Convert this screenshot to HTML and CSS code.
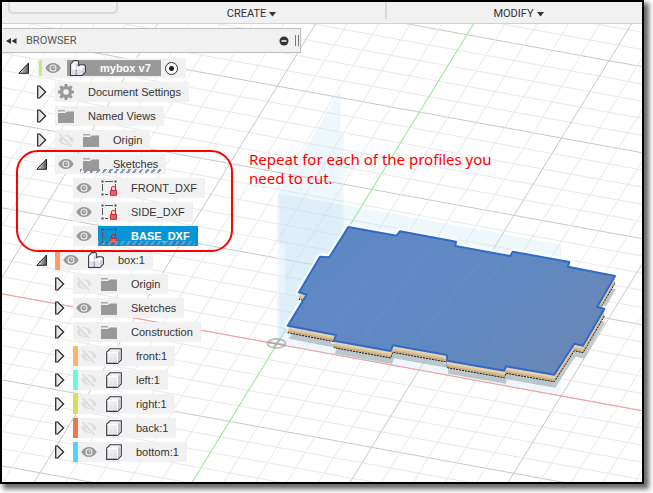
FILE: index.html
```html
<!DOCTYPE html>
<html lang="en">
<head>
<meta charset="utf-8">
<title>mybox v7</title>
<link rel="stylesheet" href="styles.css">
</head>
<body>
<svg class="defs" aria-hidden="true">
  <defs>
    <linearGradient id="gTri" x1="0" y1="0" x2="1" y2="0"><stop offset="0" stop-color="#eee"/><stop offset="1" stop-color="#555"/></linearGradient>
    <linearGradient id="gCube" x1="0" y1="0" x2="1" y2="1"><stop offset="0" stop-color="#fff"/><stop offset="1" stop-color="#d4d6de"/></linearGradient>
    <symbol id="open" viewBox="0 0 12 12"><path d="M.8 11.300 10.500 1v10.300z" fill="url(#gTri)" stroke="#222"/></symbol>
    <symbol id="closed" viewBox="0 0 12 14"><path d="M1.700 1v12h2l6-6-6-6z" fill="#e4e4ea" stroke="#222" stroke-width="1.200"/></symbol>
    <symbol id="eye" viewBox="0 0 16 16"><path d="M.3 8C2 4.700 4.800 3 8 3s6 1.700 7.700 5C14 11.300 11.200 13 8 13S2 11.300.3 8z" fill="#999"/><circle cx="8" cy="8" r="3.500" fill="#f1f1f1"/><circle cx="8" cy="8" r="2.400" fill="#999"/><circle cx="8.500" cy="7.500" r=".8" fill="#eee"/></symbol>
    <symbol id="eyeoff" viewBox="0 0 16 16"><path d="M.3 8C2 4.700 4.800 3 8 3s6 1.700 7.700 5C14 11.300 11.200 13 8 13S2 11.300.3 8z" fill="#dedede"/><circle cx="8" cy="8" r="3.500" fill="#f1f1f1"/><circle cx="8" cy="8" r="2.200" fill="#dedede"/><path d="M2.500 1.500 14.500 14" stroke="#f1f1f1" stroke-width="3.500"/><path d="M1.500 2 13.500 14.500" stroke="#dadada" stroke-width="1.500"/></symbol>
    <symbol id="folder" viewBox="0 0 16 16"><path d="M0 5h7l2-1.500h7V15H0z" fill="#999"/><path d="M0 2h7v1.500H0z" fill="#aaa"/></symbol>
    <symbol id="gear" viewBox="0 0 16 16"><circle cx="8" cy="8" r="4.500" fill="none" stroke="#999" stroke-width="3.400"/><path d="M8 0v3M8 13v3M0 8h3M13 8h3M2.300 2.300l2.200 2.200M11.500 11.500l2.200 2.200M2.300 13.700l2.200-2.200M11.500 4.500l2.200-2.200" stroke="#999" stroke-width="3"/></symbol>
    <symbol id="parts" viewBox="0 0 16 16"><path d="M.6 4 3.600.6h3.800l1.200 1v4.200l1.400-1h3.800l1.600 1.200v5.800l-3.200 3.600H.6z" fill="#fbfbfd" stroke="#333844" stroke-width="1.100" stroke-linejoin="round"/><path d="M5.800 4.200 8.100 1.900v4.300L5.800 8.600zM12.200 9 14.900 6.600v5l-2.700 3.200z" fill="#c9cbd4"/><path d="M1.200 9.500h4.500V15H1.200zM6.700 9.500h5V15h-5z" fill="#dfe0e7"/><path d="M6.200 9.300V15" stroke="#777b86" stroke-width=".9"/></symbol>
    <symbol id="cube" viewBox="0 0 16 16"><path d="M.7 4.200 4 .8h11.300v11l-3.600 3.600H.7z" fill="url(#gCube)" stroke="#333844" stroke-width="1.100" stroke-linejoin="round"/><path d="m11.900 4.500 2.900-2.900v10l-2.900 2.900z" fill="#c3c5ce"/><path d="M1.300 4.500h10.100V15" fill="none" stroke="#fff"/></symbol>
    <symbol id="sketch" viewBox="0 0 16 16"><path d="M4 1.500h8M1.500 4v7M14.500 4v4M4 14.500h3" fill="none" stroke="#555"/><path d="M.5.500h2v2h-2zM13.500.500h2v2h-2zM.5 13.500h2v2h-2z" fill="#444"/><path d="M10.500 10V8.500a2 2 0 0 1 4 0V10" fill="none" stroke="#c8282d" stroke-width="1.200"/><path d="M9.500 10.500h6v4.800h-6z" fill="#dc686b" stroke="#c8282d"/></symbol>
  </defs>
</svg>

<main class="window">
  <header class="toolbar">
    <span class="slot"></span>
    <button class="menu">CREATE <svg viewBox="0 0 7 5"><path d="M0 0h7L3.500 4.500z"/></svg></button>
    <button class="menu modify">MODIFY <svg viewBox="0 0 7 5"><path d="M0 0h7L3.500 4.500z"/></svg></button>
  </header>

  <section class="stage">
    <svg class="scene" viewBox="2 24 640 458" preserveAspectRatio="xMinYMin slice" aria-hidden="true">
      <defs>
        <g id="rows"><path class="major" d="M0 0l660 120.500"/><path class="minor" d="M0 17.200l660 120.500M0 34.400l660 120.500M0 51.600l660 120.500M0 68.800l660 120.500"/></g>
        <g id="cols"><path class="major" d="M0 24l-281.200 458"/><path class="minor" d="M31.600 24l-281.200 458M63.200 24l-281.200 458M94.800 24l-281.200 458M126.400 24l-281.200 458"/></g>
        <path id="plate" d="M348.300 227 396.700 235.700 400 231.200 456 241.700 455.300 246 510.300 256 512.700 251.700 569.300 262 568 266.700 615 276 597.300 306.700 604.300 309 583 345.700 574.300 343.700 554.300 374.700 506 366.300 504.300 370.700 447.300 360.700 447 355 392.700 345.300 390.700 351 334 340.700 336 335 287.700 325.700 306.700 294.700 299 292.300 320 256.700 329.300 257.300z"/>
        <linearGradient id="gPlate" x1="0" y1="0" x2="1" y2=".5"><stop offset="0" stop-color="#5d87c1"/><stop offset=".4" stop-color="#6089c5"/><stop offset=".75" stop-color="#6089c0"/><stop offset="1" stop-color="#6887b8"/></linearGradient>
      </defs>
      <g>
        <use href="#rows" y="-136.500"/><use href="#rows" y="-50.500"/><use href="#rows" y="35.500"/><use href="#rows" y="121.500"/><use href="#rows" y="207.500"/><use href="#rows" y="293.500"/><use href="#rows" y="379.500"/><use href="#rows" y="465.500"/>
        <use href="#cols" x="-.5"/><use href="#cols" x="157.500"/><use href="#cols" x="315.500"/><use href="#cols" x="473.500"/><use href="#cols" x="631.500"/><use href="#cols" x="789.500"/>
      </g>
      <path class="axis-x" d="M0 293.500l660 120.500"/>
      <path class="axis-y" d="M473.500 24l-281.200 458"/>
      <g class="planes">
        <path d="M340.700 89V240L279 344V192z"/>
        <path d="M340.700 134h3V238h-3z"/>
        <path d="M276.700 193 561 244.500V395L276.700 344z"/>
        <path class="strong" d="M279 193.500 340.700 204.500V240L279 342z"/>
        <path class="pale" d="M277 244h8v49h-8z"/>
      </g>
      <ellipse class="origin" cx="276.500" cy="343.500" rx="9" ry="4.500"/>
      <path class="origin" d="M268 342l17 3M279.500 339.500l-6 8"/>
      <use href="#plate" class="shade" x="1" y="13"/>
      <use href="#plate" class="glow"/>
      <use href="#plate" class="shade-edge" y="7"/>
      <use href="#plate" class="wood-dark" y="6"/>
      <use href="#plate" class="wood" y="5"/>
      <use href="#plate" class="wood-light" y="3"/>
      <use href="#plate" class="face"/>
      <path class="grain" d="M390 245 330 335M430 250 360 342M480 262 410 348M500 265 440 350M545 270 480 360M570 280 510 362M590 285 540 368"/>
    </svg>

    <p class="note">Repeat for each of the profiles you<br>need to cut.</p>

    <div class="browser-head">
      <button class="collapse" aria-label="Collapse"><svg viewBox="0 0 11 8"><path d="M5 1v6L0 4zM10.500 1v6l-5-3z"/></svg></button>
      <h1>BROWSER</h1>
      <button class="hide" aria-label="Hide"><svg viewBox="0 0 10 10"><circle cx="5" cy="5" r="4.500"/><path d="M2.500 5h5" stroke="#fff" stroke-width="1.500"/></svg></button>
      <span class="grip"></span>
    </div>

    <ul class="tree">
      <li>
        <div class="row"><button class="twist" aria-label="Collapse"><svg><use href="#open"/></svg></button>
          <div class="chip root"><i class="stripe lime"></i><button class="icon" aria-label="Visible"><svg><use href="#eye"/></svg></button><span class="label"><svg class="icon"><use href="#parts"/></svg>mybox v7</span><input type="radio" name="active" aria-label="Activate mybox" checked></div></div>
        <ul>
          <li class="row"><button class="twist" aria-label="Expand"><svg><use href="#closed"/></svg></button><div class="chip"><span class="label first"><svg class="icon"><use href="#gear"/></svg>Document Settings</span></div></li>
          <li class="row"><button class="twist" aria-label="Expand"><svg><use href="#closed"/></svg></button><div class="chip"><span class="label first"><svg class="icon"><use href="#folder"/></svg>Named Views</span></div></li>
          <li class="row"><button class="twist" aria-label="Expand"><svg><use href="#closed"/></svg></button><div class="chip"><button class="icon" aria-label="Hidden"><svg><use href="#eyeoff"/></svg></button><span class="label"><svg class="icon"><use href="#folder"/></svg>Origin</span></div></li>
          <li class="marked">
            <div class="row"><button class="twist" aria-label="Collapse"><svg><use href="#open"/></svg></button><div class="chip"><button class="icon" aria-label="Visible"><svg><use href="#eye"/></svg></button><span class="label hatch"><svg class="icon"><use href="#folder"/></svg>Sketches</span></div></div>
            <ul>
              <li class="row"><span class="twist"></span><div class="chip"><button class="icon" aria-label="Visible"><svg><use href="#eye"/></svg></button><span class="label"><svg class="icon"><use href="#sketch"/></svg>FRONT_DXF</span></div></li>
              <li class="row"><span class="twist"></span><div class="chip"><button class="icon" aria-label="Visible"><svg><use href="#eye"/></svg></button><span class="label"><svg class="icon"><use href="#sketch"/></svg>SIDE_DXF</span></div></li>
              <li class="row"><span class="twist"></span><div class="chip"><button class="icon" aria-label="Visible"><svg><use href="#eye"/></svg></button><span class="label hatch selected"><svg class="icon"><use href="#sketch"/></svg>BASE_DXF</span></div></li>
            </ul>
          </li>
          <li>
            <div class="row"><button class="twist" aria-label="Collapse"><svg><use href="#open"/></svg></button><div class="chip"><i class="stripe orange"></i><button class="icon" aria-label="Visible"><svg><use href="#eye"/></svg></button><span class="label"><svg class="icon"><use href="#parts"/></svg>box:1</span></div></div>
            <ul>
              <li class="row"><button class="twist" aria-label="Expand"><svg><use href="#closed"/></svg></button><div class="chip"><button class="icon" aria-label="Hidden"><svg><use href="#eyeoff"/></svg></button><span class="label"><svg class="icon"><use href="#folder"/></svg>Origin</span></div></li>
              <li class="row"><button class="twist" aria-label="Expand"><svg><use href="#closed"/></svg></button><div class="chip"><button class="icon" aria-label="Visible"><svg><use href="#eye"/></svg></button><span class="label"><svg class="icon"><use href="#folder"/></svg>Sketches</span></div></li>
              <li class="row"><button class="twist" aria-label="Expand"><svg><use href="#closed"/></svg></button><div class="chip"><button class="icon" aria-label="Hidden"><svg><use href="#eyeoff"/></svg></button><span class="label"><svg class="icon"><use href="#folder"/></svg>Construction</span></div></li>
              <li class="row"><button class="twist" aria-label="Expand"><svg><use href="#closed"/></svg></button><div class="chip"><i class="stripe amber"></i><button class="icon" aria-label="Hidden"><svg><use href="#eyeoff"/></svg></button><span class="label"><svg class="icon"><use href="#cube"/></svg>front:1</span></div></li>
              <li class="row"><button class="twist" aria-label="Expand"><svg><use href="#closed"/></svg></button><div class="chip"><i class="stripe aqua"></i><button class="icon" aria-label="Hidden"><svg><use href="#eyeoff"/></svg></button><span class="label"><svg class="icon"><use href="#cube"/></svg>left:1</span></div></li>
              <li class="row"><button class="twist" aria-label="Expand"><svg><use href="#closed"/></svg></button><div class="chip"><i class="stripe olive"></i><button class="icon" aria-label="Hidden"><svg><use href="#eyeoff"/></svg></button><span class="label"><svg class="icon"><use href="#cube"/></svg>right:1</span></div></li>
              <li class="row"><button class="twist" aria-label="Expand"><svg><use href="#closed"/></svg></button><div class="chip"><i class="stripe rust"></i><button class="icon" aria-label="Hidden"><svg><use href="#eyeoff"/></svg></button><span class="label"><svg class="icon"><use href="#cube"/></svg>back:1</span></div></li>
              <li class="row"><button class="twist" aria-label="Expand"><svg><use href="#closed"/></svg></button><div class="chip"><i class="stripe sky"></i><button class="icon" aria-label="Visible"><svg><use href="#eye"/></svg></button><span class="label"><svg class="icon"><use href="#cube"/></svg>bottom:1</span></div></li>
            </ul>
          </li>
        </ul>
      </li>
    </ul>
  </section>
</main>
</body>
</html>
```
FILE: styles.css
```css
* { box-sizing: border-box; }
body { margin: 0; padding: 0 9px 9px 0; background: #fff; font: 11px/16px "Liberation Sans", Arial, sans-serif; color: #333; }
button { border: 0; padding: 0; margin: 0; background: none; font: inherit; color: inherit; }
svg { display: block; }
ul { list-style: none; margin: 0; padding: 0; }
.defs { position: absolute; width: 0; height: 0; }

.window { border: 2px solid #000; box-shadow: 4px 4px 5px 1px rgba(0, 0, 0, .6); overflow: hidden; background: #fff; }

.toolbar { display: grid; grid-template-columns: 116px 267px 1fr; height: 22px; background: #f1f1f1; border-bottom: 1px solid #d2d2d2; }
.slot { height: 12px; margin-left: 6px; border: 2px solid #dcdcdc; border-top: 0; border-radius: 0 0 5px 5px; }
.menu { display: flex; align-items: center; justify-content: center; gap: 3px; height: 24px; font-family: Roboto, sans-serif; position: relative; }
.menu svg { width: 7px; height: 5px; fill: #333; }
.modify { padding-left: 10px; }
.modify::before { content: ""; position: absolute; left: 0; top: 0; width: 2px; height: 17px; background: #dadada; }

.stage { position: relative; padding: 4px 0 18px; }
.scene { position: absolute; inset: 0; width: 100%; height: 100%; }
.major { stroke: #c8c8c8; fill: none; }
.minor { stroke: #e9e9e9; fill: none; }
.planes { fill: #bfe3f5; fill-opacity: .27; }
.planes .strong { fill-opacity: .1; }
.planes .pale { fill: #fff; fill-opacity: .4; }
.axis-x { stroke: #ff9a9a; }
.axis-y { stroke: #8dfa8d; }
.origin { fill: none; stroke: #999; stroke-width: 2; stroke-opacity: .6; }
.glow { fill: #fff; stroke: #fff; stroke-width: 7; stroke-opacity: .7; stroke-linejoin: round; }
.shade { fill: #9aa5ab; fill-opacity: .6; }
.shade-edge { fill: #d8c39c; stroke: #111; stroke-dasharray: 2 1; }
.wood-dark { fill: #c4a470; }
.wood { fill: #dcc296; }
.wood-light { fill: #e6d4bb; }
.face { fill: url(#gPlate); stroke: #2f6bc6; stroke-width: 2; stroke-linejoin: round; }
.grain { fill: none; stroke: #7095cc; stroke-width: 5; stroke-opacity: .12; }

.note { position: absolute; left: 247px; top: 126px; margin: 0; color: #f00; font: 15px/19px "Noto Sans", sans-serif; }

.browser-head { position: relative; display: flex; align-items: center; width: 299px; height: 25px; padding: 0 1px 0 4px; background: #f1f1f1; border: 1px solid #bcbcbc; border-left: 0; }
.browser-head h1 { flex: 1; margin: 0 0 0 9px; font: 11px/16px Roboto, sans-serif; color: #555; }
.collapse svg { width: 11px; height: 8px; fill: #333; }
.hide svg { width: 10px; height: 10px; fill: #333; }
.grip { width: 4px; height: 11px; margin-left: 6px; border: solid #777; border-width: 0 1px; }

.tree { position: relative; padding: 3px 0 0 16px; }
.tree ul { padding-left: 18px; }
.row { display: flex; align-items: center; height: 24px; }
.twist { width: 19px; flex: none; }
.twist svg { width: 12px; height: 14px; }
.chip { display: flex; align-items: center; height: 20px; background: #f1f1f1; }
.icon, .icon svg { width: 16px; height: 16px; flex: none; }
.chip > .icon { margin: 0 6px 0 3px; }
.stripe { align-self: stretch; width: 5px; }
.label { display: flex; align-items: center; gap: 14px; height: 20px; padding: 0 8px 0 3px; position: relative; white-space: nowrap; }
.root .stripe { width: 3px; margin: 2px 0 2px 2px; }
.root .label { height: 16px; padding-right: 10px; background: #999; color: #fff; font-weight: bold; }
.root input { appearance: none; width: 13px; height: 13px; margin: 0 8px 0 4px; border: 1px solid #333; border-radius: 50%; background: radial-gradient(circle, #222 0 2px, #fff 3px); }
.selected { background: #0696d7; color: #fff; font-weight: bold; }
.hatch::after { content: ""; position: absolute; left: 0; right: 3px; bottom: 1px; height: 4px; background: repeating-linear-gradient(125deg, #8292b8 0 2px, transparent 2px 5px); }
.lime { background: #c2f26c; }
.orange { background: #ff9c66; }
.amber { background: #ffb468; }
.aqua { background: #6cfadc; }
.olive { background: #d8dc58; }
.rust { background: #ec7650; }
.sky { background: #50d4fa; }

.marked { position: relative; width: 197px; }
.marked::after { content: ""; position: absolute; inset: -2px 0 -4px -20px; border: 2px solid #f00; border-radius: 22px; pointer-events: none; }
```
